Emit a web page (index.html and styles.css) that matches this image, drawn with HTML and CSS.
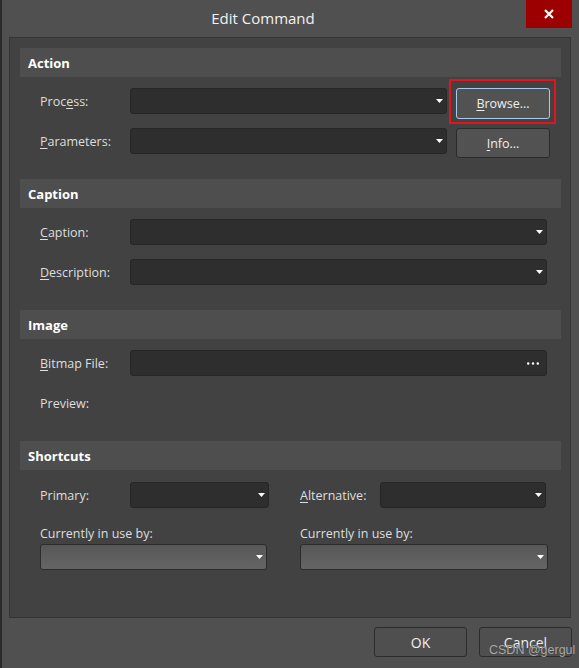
FILE: index.html
```html
<!DOCTYPE html>
<html>
<head>
<meta charset="utf-8">
<link rel="stylesheet" href="styles.css">
</head>
<body>
<div class="window">
  <div class="titlebar">
    <div class="title">Edit Command</div>
    <div class="close">
      <svg width="10" height="10" viewBox="0 0 10 10"><path d="M1 1 L9 9 M9 1 L1 9" stroke="#fff" stroke-width="2.2" fill="none"/></svg>
    </div>
  </div>
  <div class="panel">
    <section class="group">
      <div class="group-head">Action</div>
      <div class="group-body body-action">
        <label class="lbl">Proc<u>e</u>ss:</label>
        <div class="combo"><svg class="arrow" width="7" height="4" viewBox="0 0 7 4"><polygon points="0,0 7,0 3.5,4" fill="#fff"/></svg></div>
        <div class="browse-wrap">
          <button class="btn btn-focus"><u>B</u>rowse...</button>
          <span class="highlight"></span>
        </div>
        <label class="lbl"><u>P</u>arameters:</label>
        <div class="combo"><svg class="arrow" width="7" height="4" viewBox="0 0 7 4"><polygon points="0,0 7,0 3.5,4" fill="#fff"/></svg></div>
        <button class="btn btn-side"><u>I</u>nfo...</button>
      </div>
    </section>
    <section class="group">
      <div class="group-head">Caption</div>
      <div class="group-body">
        <label class="lbl"><u>C</u>aption:</label>
        <div class="combo"><svg class="arrow" width="7" height="4" viewBox="0 0 7 4"><polygon points="0,0 7,0 3.5,4" fill="#fff"/></svg></div>
        <label class="lbl"><u>D</u>escription:</label>
        <div class="combo"><svg class="arrow" width="7" height="4" viewBox="0 0 7 4"><polygon points="0,0 7,0 3.5,4" fill="#fff"/></svg></div>
      </div>
    </section>
    <section class="group">
      <div class="group-head">Image</div>
      <div class="group-body">
        <label class="lbl"><u>B</u>itmap File:</label>
        <div class="combo field"><svg class="dots" width="12" height="3" viewBox="0 0 12 3"><circle cx="1.2" cy="1.5" r="1.2" fill="#fff"/><circle cx="6" cy="1.5" r="1.2" fill="#fff"/><circle cx="10.8" cy="1.5" r="1.2" fill="#fff"/></svg></div>
        <label class="lbl">Preview:</label>
        <div></div>
      </div>
    </section>
    <section class="group">
      <div class="group-head">Shortcuts</div>
      <div class="shortcuts">
        <div class="sc-field">
          <label class="lbl sc-lbl-l">Primary:</label>
          <div class="combo combo-primary"><svg class="arrow" width="7" height="4" viewBox="0 0 7 4"><polygon points="0,0 7,0 3.5,4" fill="#fff"/></svg></div>
        </div>
        <div class="sc-field">
          <label class="lbl sc-lbl-r"><u>A</u>lternative:</label>
          <div class="combo combo-alt"><svg class="arrow" width="7" height="4" viewBox="0 0 7 4"><polygon points="0,0 7,0 3.5,4" fill="#fff"/></svg></div>
        </div>
        <div class="sc-use">
          <label class="lbl use-lbl">Currently in use by:</label>
          <div class="combo combo-light use-left"><svg class="arrow" width="7" height="4" viewBox="0 0 7 4"><polygon points="0,0 7,0 3.5,4" fill="#fff"/></svg></div>
        </div>
        <div class="sc-use">
          <label class="lbl use-lbl">Currently in use by:</label>
          <div class="combo combo-light use-right"><svg class="arrow" width="7" height="4" viewBox="0 0 7 4"><polygon points="0,0 7,0 3.5,4" fill="#fff"/></svg></div>
        </div>
      </div>
    </section>
  </div>
  <div class="footer">
    <button class="btn btn-footer">OK</button>
    <button class="btn btn-footer">Cancel</button>
  </div>
  <span class="watermark">CSDN @gergul</span>
</div>
</body>
</html>
```
FILE: styles.css
```css
html, body {
  margin: 0;
  padding: 0;
  background: #505050;
}
body {
  font-family: "Open Sans", "Noto Sans", sans-serif;
  color: #dedede;
}
.window {
  position: relative;
  width: 579px;
  height: 668px;
  box-sizing: border-box;
  border-left: 2px solid #2b2b2b;
  background: #505050;
  display: flex;
  flex-direction: column;
}
.titlebar {
  height: 37px;
  display: flex;
  align-items: flex-start;
  flex-shrink: 0;
}
.title {
  flex: 1;
  text-align: center;
  color: #f2f2f2;
  font-size: 15px;
  line-height: 36px;
  padding-right: 2px;
}
.close {
  width: 46px;
  height: 28px;
  margin-right: 7px;
  background: #9d0000;
  display: flex;
  align-items: center;
  justify-content: center;
}
.panel {
  margin-left: 7px;
  margin-right: 8px;
  height: 581px;
  flex-shrink: 0;
  box-sizing: border-box;
  border: 1px solid #353535;
  background: #424242;
  padding: 10px 9px 0 10px;
}
.group-head {
  height: 29px;
  line-height: 30px;
  background: #4e4e4e;
  color: #ffffff;
  font-weight: 700;
  font-size: 13px;
  padding-left: 8px;
}
.group-body {
  display: grid;
  grid-template-columns: 90px 1fr;
  grid-template-rows: 26px 26px;
  row-gap: 14px;
  align-items: start;
  padding: 11px 14px 25px 20px;
}
.body-action {
  grid-template-columns: 90px 1fr 103px;
  padding-right: 11px;
}
.lbl {
  font-size: 12.5px;
  line-height: 26px;
  padding-top: 1px;
  color: #dedede;
  white-space: nowrap;
}
.lbl u {
  text-decoration-thickness: 1px;
  text-underline-offset: 2px;
}
.combo {
  height: 26px;
  box-sizing: border-box;
  background: #2e2e2e;
  border: 1px solid #262626;
  border-radius: 3px;
  display: flex;
  align-items: center;
  justify-content: flex-end;
  padding-right: 3px;
}
.arrow {
  display: block;
  margin-top: -1px;
}
.field {
  padding-right: 7px;
}
.dots {
  display: block;
}
.btn {
  font-family: "Open Sans", "Noto Sans", sans-serif;
  width: 94px;
  height: 31px;
  box-sizing: border-box;
  background: #525252;
  border: 1px solid #2b2b2b;
  border-radius: 3px;
  color: #eeeeee;
  font-size: 12.5px;
  padding: 0;
  display: flex;
  align-items: center;
  justify-content: center;
}
.btn u {
  text-decoration-thickness: 1px;
  text-underline-offset: 2px;
}
.btn-focus {
  border-color: #a9c9ea;
}
.btn-side {
  margin-left: 9px;
  height: 30px;
}
.browse-wrap {
  position: relative;
  margin-left: 9px;
  width: 94px;
}
.highlight {
  position: absolute;
  left: -7px;
  top: -9px;
  right: -6px;
  bottom: -5px;
  border: 2px solid #e3141d;
  pointer-events: none;
}
.shortcuts {
  display: grid;
  grid-template-columns: 229px 248px;
  column-gap: 31px;
  row-gap: 16px;
  padding: 12px 0 0 20px;
}
.sc-field {
  display: flex;
  align-items: flex-start;
}
.sc-lbl-l {
  width: 90px;
}
.sc-lbl-r {
  width: 80px;
}
.combo-primary {
  width: 139px;
}
.combo-alt {
  width: 166px;
}
.sc-use {
  display: flex;
  flex-direction: column;
}
.use-lbl {
  line-height: 18px;
  padding-top: 0;
}
.combo-light {
  margin-top: 1px;
  height: 26px;
  background: linear-gradient(#575757, #656565);
  border-color: #2c2c2c;
}
.use-left {
  width: 227px;
}
.use-right {
  width: 248px;
}
.footer {
  display: flex;
  justify-content: flex-end;
  gap: 12px;
  padding: 9px 7px 0 0;
}
.btn-footer {
  width: 93px;
  height: 30px;
  background: #4f4f4f;
  border-color: #2c2c2c;
  font-size: 14px;
  color: #f0f0f0;
}
.watermark {
  position: absolute;
  left: 487px;
  top: 643px;
  font-family: "Liberation Sans", Arial, sans-serif;
  font-size: 12.5px;
  color: #a9a9a9;
  text-shadow: 0 0 1px #3a3a3a;
  pointer-events: none;
}
```
